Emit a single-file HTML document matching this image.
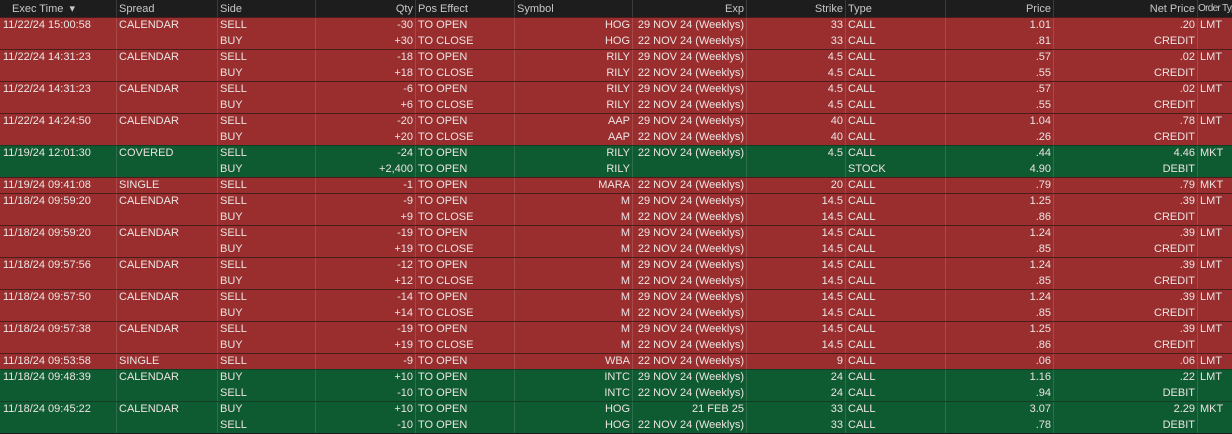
<!DOCTYPE html><html><head><style>
body{margin:0;width:1232px;height:434px;overflow:hidden;background:#1c1c1c;font-family:"Liberation Sans",sans-serif;font-size:11px;}
table{border-collapse:collapse;table-layout:fixed;width:1232px;}
td,th{height:16px;padding:1px 2px 0 3px;white-space:nowrap;overflow:hidden;border:0;line-height:15px;box-sizing:border-box;}
td+td,th+th{box-shadow:inset 1px 0 0 rgba(255,255,255,0.13);}
th{height:17px;line-height:16px;font-weight:normal;color:#c8c8c8;background:#1d1d1d;text-align:left;}
td{color:#ece4e4;}
tr.r td{background:#9a2e2e}
tr.g td{background:#0e5a31}
tr.t td{box-shadow:inset 0 1px 0 #4a1c1c}
tr.t td+td{box-shadow:inset 0 1px 0 #4a1c1c,inset 1px 0 0 rgba(255,255,255,0.13)}
tr.g.t td{box-shadow:inset 0 1px 0 #153c25}
tr.g.t td+td{box-shadow:inset 0 1px 0 #153c25,inset 1px 0 0 rgba(255,255,255,0.13)}
.R{text-align:right}
</style></head><body>
<table>
<colgroup><col style="width:116px"><col style="width:101px"><col style="width:98px"><col style="width:100px"><col style="width:99px"><col style="width:118px"><col style="width:114px"><col style="width:99px"><col style="width:100px"><col style="width:108px"><col style="width:144px"><col style="width:35px"></colgroup>
<tr><th style="padding-left:12px">Exec Time &nbsp;▾</th><th>Spread</th><th>Side</th><th class="R">Qty</th><th>Pos Effect</th><th>Symbol</th><th class="R">Exp</th><th class="R">Strike</th><th>Type</th><th class="R">Price</th><th class="R">Net Price</th><th style="padding:1px 0 0 1px;letter-spacing:-0.7px;font-size:10px;overflow:visible">Order Type</th></tr>
<tbody id="b"></tbody>
</table>
<script>
var G=[
["r","11/22/24 15:00:58","CALENDAR",[["SELL","-30","TO OPEN","HOG","29 NOV 24 (Weeklys)","33","CALL","1.01",".20","LMT"],["BUY","+30","TO CLOSE","HOG","22 NOV 24 (Weeklys)","33","CALL",".81","CREDIT",""]]],
["r","11/22/24 14:31:23","CALENDAR",[["SELL","-18","TO OPEN","RILY","29 NOV 24 (Weeklys)","4.5","CALL",".57",".02","LMT"],["BUY","+18","TO CLOSE","RILY","22 NOV 24 (Weeklys)","4.5","CALL",".55","CREDIT",""]]],
["r","11/22/24 14:31:23","CALENDAR",[["SELL","-6","TO OPEN","RILY","29 NOV 24 (Weeklys)","4.5","CALL",".57",".02","LMT"],["BUY","+6","TO CLOSE","RILY","22 NOV 24 (Weeklys)","4.5","CALL",".55","CREDIT",""]]],
["r","11/22/24 14:24:50","CALENDAR",[["SELL","-20","TO OPEN","AAP","29 NOV 24 (Weeklys)","40","CALL","1.04",".78","LMT"],["BUY","+20","TO CLOSE","AAP","22 NOV 24 (Weeklys)","40","CALL",".26","CREDIT",""]]],
["g","11/19/24 12:01:30","COVERED",[["SELL","-24","TO OPEN","RILY","22 NOV 24 (Weeklys)","4.5","CALL",".44","4.46","MKT"],["BUY","+2,400","TO OPEN","RILY","","","STOCK","4.90","DEBIT",""]]],
["r","11/19/24 09:41:08","SINGLE",[["SELL","-1","TO OPEN","MARA","22 NOV 24 (Weeklys)","20","CALL",".79",".79","MKT"]]],
["r","11/18/24 09:59:20","CALENDAR",[["SELL","-9","TO OPEN","M","29 NOV 24 (Weeklys)","14.5","CALL","1.25",".39","LMT"],["BUY","+9","TO CLOSE","M","22 NOV 24 (Weeklys)","14.5","CALL",".86","CREDIT",""]]],
["r","11/18/24 09:59:20","CALENDAR",[["SELL","-19","TO OPEN","M","29 NOV 24 (Weeklys)","14.5","CALL","1.24",".39","LMT"],["BUY","+19","TO CLOSE","M","22 NOV 24 (Weeklys)","14.5","CALL",".85","CREDIT",""]]],
["r","11/18/24 09:57:56","CALENDAR",[["SELL","-12","TO OPEN","M","29 NOV 24 (Weeklys)","14.5","CALL","1.24",".39","LMT"],["BUY","+12","TO CLOSE","M","22 NOV 24 (Weeklys)","14.5","CALL",".85","CREDIT",""]]],
["r","11/18/24 09:57:50","CALENDAR",[["SELL","-14","TO OPEN","M","29 NOV 24 (Weeklys)","14.5","CALL","1.24",".39","LMT"],["BUY","+14","TO CLOSE","M","22 NOV 24 (Weeklys)","14.5","CALL",".85","CREDIT",""]]],
["r","11/18/24 09:57:38","CALENDAR",[["SELL","-19","TO OPEN","M","29 NOV 24 (Weeklys)","14.5","CALL","1.25",".39","LMT"],["BUY","+19","TO CLOSE","M","22 NOV 24 (Weeklys)","14.5","CALL",".86","CREDIT",""]]],
["r","11/18/24 09:53:58","SINGLE",[["SELL","-9","TO OPEN","WBA","22 NOV 24 (Weeklys)","9","CALL",".06",".06","LMT"]]],
["g","11/18/24 09:48:39","CALENDAR",[["BUY","+10","TO OPEN","INTC","29 NOV 24 (Weeklys)","24","CALL","1.16",".22","LMT"],["SELL","-10","TO OPEN","INTC","22 NOV 24 (Weeklys)","24","CALL",".94","DEBIT",""]]],
["g","11/18/24 09:45:22","CALENDAR",[["BUY","+10","TO OPEN","HOG","21 FEB 25","33","CALL","3.07","2.29","MKT"],["SELL","-10","TO OPEN","HOG","22 NOV 24 (Weeklys)","33","CALL",".78","DEBIT",""]]]
];
var h="";
G.forEach(function(g){g[3].forEach(function(r,i){
h+='<tr class="'+g[0]+(i==0?' t':'')+'"><td>'+(i==0?g[1]:'')+'</td><td>'+(i==0?g[2]:'')+'</td><td>'+r[0]+'</td><td class="R">'+r[1]+'</td><td>'+r[2]+'</td><td class="R">'+r[3]+'</td><td class="R">'+r[4]+'</td><td class="R">'+r[5]+'</td><td>'+r[6]+'</td><td class="R">'+r[7]+'</td><td class="R">'+r[8]+'</td><td>'+r[9]+'</td></tr>';
});});
document.getElementById("b").innerHTML=h;
</script>
</body></html>
